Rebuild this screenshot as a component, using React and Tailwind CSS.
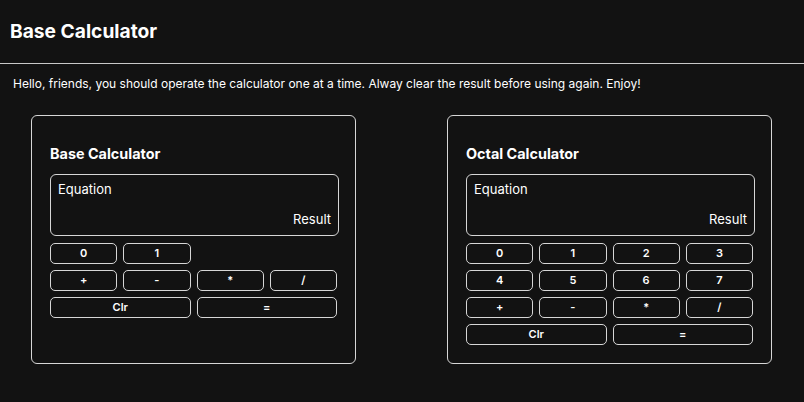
const BASE_KEYS = [
  { label: '0' },
  { label: '1' },
  { label: '', empty: true },
  { label: '', empty: true },
  { label: '+' },
  { label: '-' },
  { label: '*' },
  { label: '/' },
  { label: 'Clr', wide: true },
  { label: '=', wide: true },
]

const OCTAL_KEYS = [
  { label: '0' },
  { label: '1' },
  { label: '2' },
  { label: '3' },
  { label: '4' },
  { label: '5' },
  { label: '6' },
  { label: '7' },
  { label: '+' },
  { label: '-' },
  { label: '*' },
  { label: '/' },
  { label: 'Clr', wide: true },
  { label: '=', wide: true },
]

function Calculator({ title, keys }) {
  return (
    <div className="w-[325px] rounded-[6px] border border-[#d6d6d6] px-[18px] pt-[28px] pb-[18px]">
      <h2 className="text-[14.4px] leading-[20px] font-bold text-white">{title}</h2>
      <div className="mt-[10px] flex h-[62px] w-[289px] flex-col justify-between rounded-[6px] border border-[#d6d6d6] px-[7px] pt-[5px] pb-[7px] text-[13px] leading-[18px] text-white">
        <span>Equation</span>
        <span className="self-end">Result</span>
      </div>
      <div className="mt-[7px] grid w-[287px] grid-cols-4 gap-[6px]">
        {keys.map((k, i) =>
          k.empty ? (
            <div key={i} />
          ) : (
            <button
              key={i}
              className={`h-[21px] rounded-[5px] border border-[#d6d6d6] bg-transparent text-[11px] font-semibold leading-none text-white ${
                k.wide ? 'col-span-2' : ''
              }`}
            >
              {k.label}
            </button>
          )
        )}
      </div>
    </div>
  )
}

export default function App() {
  return (
    <div className="min-h-[402px] bg-[#121212] font-['Inter',sans-serif] text-white">
      <header className="flex h-[64px] items-center border-b border-[#c8c8c8] px-[10px]">
        <h1 className="text-[19.2px] font-bold">Base Calculator</h1>
      </header>
      <p className="mt-[12px] px-[13px] text-[12px] leading-[16px]">
        Hello, friends, you should operate the calculator one at a time. Alway clear the result before using again. Enjoy!
      </p>
      <div className="mt-[23px] flex gap-[91px] pl-[31px]">
        <Calculator title="Base Calculator" keys={BASE_KEYS} />
        <Calculator title="Octal Calculator" keys={OCTAL_KEYS} />
      </div>
    </div>
  )
}
